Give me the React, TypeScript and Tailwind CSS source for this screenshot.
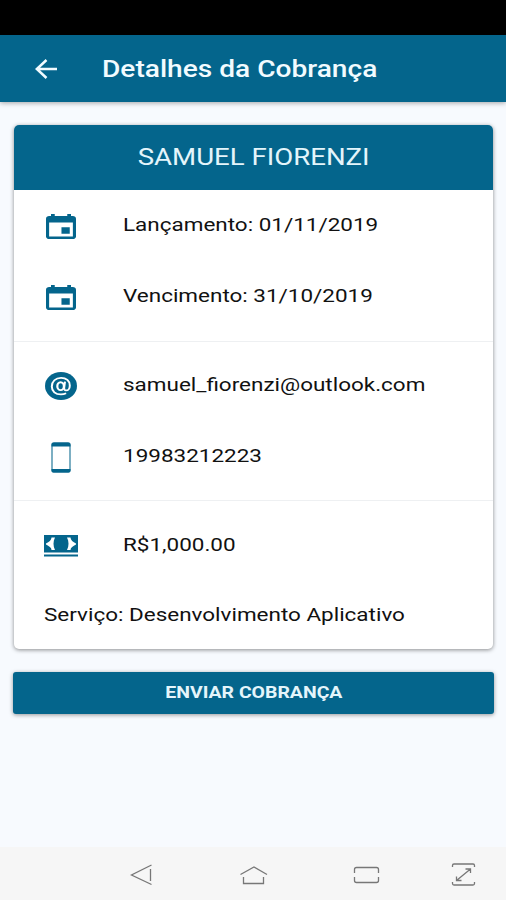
import type { ReactNode } from 'react'
import clsx from 'clsx'

function CalendarIcon() {
  return (
    <svg viewBox="64 64 384 384" preserveAspectRatio="none" className="h-[25px] w-[30px]" fill="currentColor">
      <path d="M368 268H262v100h106V268zM336 64v32H176V64h-48v32h-24c-22 0-40 18-40 40v272c0 22 18 40 40 40h304c22 0 40-18 40-40V136c0-22-18-40-40-40h-24V64h-48zm72 344H104V196h304v212z" />
    </svg>
  )
}

function AtIcon() {
  return (
    <svg viewBox="0 0 32 32" preserveAspectRatio="none" className="h-7 w-8" fill="none">
      <circle cx="16" cy="16" r="16" fill="currentColor" />
      <ellipse cx="15.600" cy="16.200" rx="3.300" ry="4.500" stroke="white" strokeWidth="2.200" />
      <path
        d="M20 11l-.8 7c-.2 2 .5 3.100 1.900 3.100 2.200 0 3.700-2.600 3.700-5.800 0-5-3.600-8.700-8.700-8.700-5.500 0-9.300 4.300-9.300 9.900 0 5.500 3.700 9.200 9.100 9.200 2 0 3.800-.5 5.200-1.300"
        stroke="white"
        strokeWidth="2"
      />
    </svg>
  )
}

function PhoneIcon() {
  return (
    <svg viewBox="0 0 20 31" className="h-[31px] w-5" fill="none">
      <rect x="1" y="1" width="18" height="29" rx="2" stroke="currentColor" strokeOpacity="0.65" strokeWidth="1.600" />
      <path d="M.5 4.500V3C.5 1.300 1.500.5 3 .5h14c1.500 0 2.500.8 2.500 2.500v1.500zM.5 27v1.200c0 1.600 1 2.300 2.500 2.300h14c1.500 0 2.500-.7 2.500-2.300V27z" fill="currentColor" />
    </svg>
  )
}

function CashIcon() {
  return (
    <svg viewBox="0 0 34 22" className="h-[22px] w-[34px]">
      <path d="M0 0h34v17.500H0zM0 19.500h34v2H0z" fill="currentColor" />
      <path
        d="M7.500 2.500H11C9 6 9 11.500 11 15H7.500C7.500 12.500 5 11 2 9.500v-1c3-1.500 5.500-3.500 5.500-6zM26.500 2.500H23c2 3.500 2 9 0 12.500h3.500c0-2.500 2.500-4 5.500-5.500v-1c-3-1.500-5.500-3.500-5.500-6z"
        fill="white"
      />
    </svg>
  )
}

function Item({ icon, children, className }: { icon: ReactNode; children: ReactNode; className?: string }) {
  return (
    <li className={clsx('flex h-[71px] items-center pl-[30px]', className)}>
      <span className="flex w-[34px] justify-center pt-px text-[#04658c]">{icon}</span>
      <span className="ml-[45px] origin-left scale-x-[1.248] whitespace-nowrap pb-[3px] text-[18px]">{children}</span>
    </li>
  )
}

export default function App() {
  return (
    <div className="flex h-[900px] w-[506px] flex-col overflow-hidden bg-[#f7fafe] font-['Roboto',sans-serif] text-[#111]">
      <div className="h-[35px] shrink-0 bg-black" />
      <header className="z-10 flex h-[67px] shrink-0 items-center bg-[#04658c] text-[#f2fbff] shadow-[0_1px_5px_rgba(0,0,0,0.35)]">
        <svg viewBox="0 0 22 20" className="ml-[35px] h-5 w-[22px]" fill="none" stroke="currentColor" strokeWidth="2.500">
          <path d="M11.500 1L1.800 10l9.700 9M2 10h20" />
        </svg>
        <h1 className="ml-[45px] origin-left scale-x-[1.222] pt-1 text-[23px] font-medium whitespace-nowrap">
          Detalhes da Cobrança
        </h1>
      </header>

      <main className="flex-1 pt-[23px]">
        <section className="mr-[13px] ml-[14px] h-[524px] overflow-hidden rounded-[5px] bg-white shadow-[0_1px_4px_rgba(0,0,0,0.45)]">
          <h2 className="flex h-[65px] items-center justify-center bg-[#04658c] pt-0.5 text-[23px] text-[#e4f5fb]">
            <span className="scale-x-[1.2] whitespace-nowrap">SAMUEL FIORENZI</span>
          </h2>
          <ul className="h-[151px]">
            <Item icon={<CalendarIcon />}>Lançamento: 01/11/2019</Item>
            <Item icon={<CalendarIcon />}>Vencimento: 31/10/2019</Item>
          </ul>
          <ul className="h-[159px] border-t border-[#eef0f2] pt-2">
            <Item icon={<AtIcon />}>samuel_fiorenzi@outlook.com</Item>
            <Item icon={<PhoneIcon />}>19983212223</Item>
          </ul>
          <ul className="border-t border-[#eef0f2] pt-2">
            <Item icon={<CashIcon />} className="pt-0.5">R$1,000.00</Item>
            <li className="flex h-[69px] items-center pl-[30px]">
              <span className="origin-left scale-x-[1.248] text-[18px] whitespace-nowrap">
                Serviço: Desenvolvimento Aplicativo
              </span>
            </li>
          </ul>
        </section>

        <button className="mt-[23px] ml-[13px] flex h-[42px] w-[481px] items-center justify-center rounded-[3px] bg-[#04658c] text-[16px] font-bold text-[#e4f5fb] shadow-[0_1px_4px_rgba(0,0,0,0.4)]">
          <span className="scale-x-[1.215] whitespace-nowrap">ENVIAR COBRANÇA</span>
        </button>
      </main>

      <nav className="flex h-[53px] shrink-0 bg-[#f6f6f6] text-[#777]">
        <svg viewBox="0 0 506 53" className="h-[53px] w-full" fill="none" stroke="currentColor" strokeWidth="1.300">
          <path d="M151.500 18l-20 10 20 9.500M150.500 22v12" />
          <path d="M240.500 27.500L254 20l13 7.500M243.500 30v6.500h20V30" />
          <path d="M354.500 26v-3.500q0-2 2-2h20q2 0 2 2V26M354.500 30v3.500q0 2 2 2h20q2 0 2-2V30" />
          <path d="M452.500 20v-1.500q0-1.500 1.500-1.500h19q1.500 0 1.500 1.500V20M452.500 35v1.500q0 1.500 1.500 1.500h19q1.500 0 1.500-1.500V35M456.500 33.500l14-11.500M465.500 22h5v4M456.500 29.500v4h5" />
        </svg>
      </nav>
    </div>
  )
}
